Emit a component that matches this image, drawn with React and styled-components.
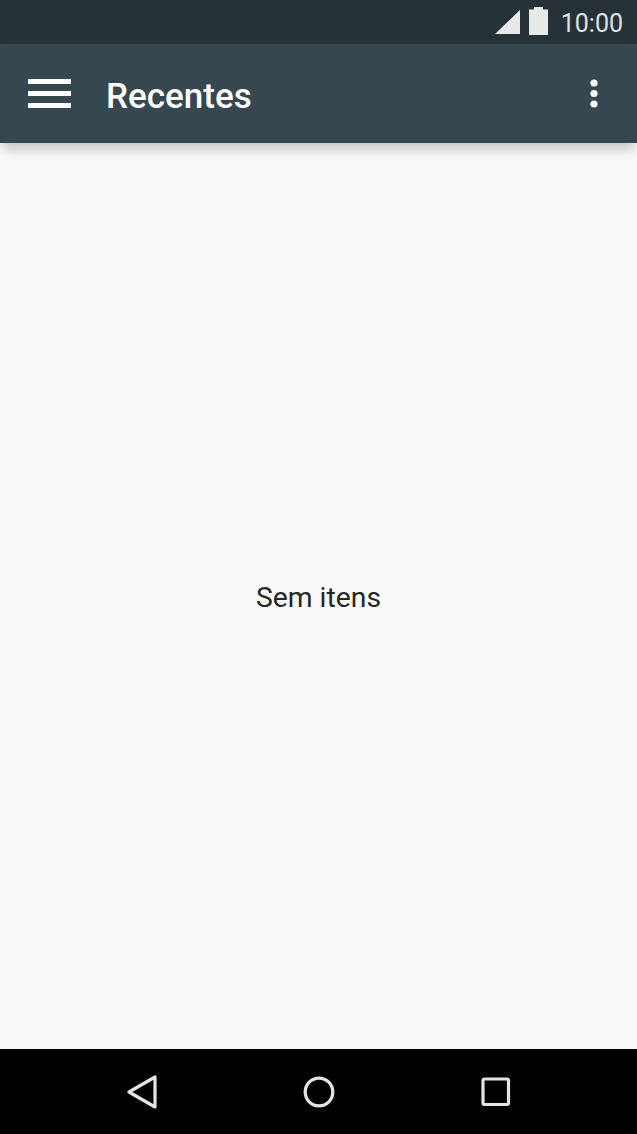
import React from "react";
import styled, { createGlobalStyle } from "styled-components";

const GlobalStyle = createGlobalStyle`
  html, body {
    margin: 0;
    padding: 0;
    height: 100%;
    background: #fafafa;
  }
  #root {
    height: 100%;
  }
`;

const Screen = styled.div`
  width: 637px;
  height: 1134px;
  display: flex;
  flex-direction: column;
  overflow: hidden;
  font-family: Roboto, "Liberation Sans", sans-serif;
  background: #fafafa;
`;

const StatusBar = styled.div`
  height: 44px;
  flex: none;
  display: flex;
  align-items: center;
  justify-content: flex-end;
  padding-right: 14px;
  background: #263238;
`;

const SignalIcon = styled.svg`
  display: block;
  margin-right: 9px;
`;

const BatteryIcon = styled.svg`
  display: block;
  margin-right: 13px;
  margin-bottom: 2px;
`;

const Clock = styled.span`
  padding-top: 4px;
  font-size: 25px;
  line-height: 44px;
  color: #dfe1e2;
`;

const Toolbar = styled.header`
  position: relative;
  z-index: 1;
  height: 99px;
  flex: none;
  display: flex;
  align-items: center;
  padding: 0 39px 0 28px;
  background: #37474f;
  box-shadow: 0 9px 12px -2px rgba(0, 0, 0, 0.2);
`;

const MenuIcon = styled.svg`
  display: block;
  margin-right: 35px;
`;

const Title = styled.h1`
  flex: 1;
  margin: 0;
  padding-top: 5px;
  font-size: 35px;
  font-weight: 500;
  color: #ffffff;
`;

const OverflowIcon = styled.svg`
  display: block;
`;

const Content = styled.main`
  flex: 1;
  display: flex;
  align-items: center;
  justify-content: center;
  background: #fafafa;
`;

const EmptyText = styled.p`
  margin: 0;
  padding-top: 2px;
  font-size: 28.3px;
  color: #262626;
`;

const NavBar = styled.nav`
  height: 85px;
  flex: none;
  display: flex;
  align-items: center;
  justify-content: center;
  gap: 146px;
  background: #000000;
`;

const NavIcon = styled.svg`
  display: block;
  fill: none;
  stroke: #e4e4e4;
  stroke-width: 3.2;
  stroke-linejoin: round;
`;

export default function App() {
  return (
    <Screen>
      <GlobalStyle />
      <StatusBar>
        <SignalIcon width="25" height="24" viewBox="0 0 25 24">
          <path d="M25 0V24H0Z" fill="#e8e9e9" />
        </SignalIcon>
        <BatteryIcon width="19" height="28" viewBox="0 0 19 28">
          <path d="M5 0H14V2.5H19V28H0V2.5H5Z" fill="#e8e9e9" />
        </BatteryIcon>
        <Clock>10:00</Clock>
      </StatusBar>
      <Toolbar>
        <MenuIcon width="43" height="29" viewBox="0 0 43 29">
          <path d="M0 0H43V5H0ZM0 12H43V17H0ZM0 24H43V29H0Z" fill="#ffffff" />
        </MenuIcon>
        <Title>Recentes</Title>
        <OverflowIcon width="8" height="29" viewBox="0 0 8 29">
          <circle cx="4" cy="4" r="3.6" fill="#ffffff" />
          <circle cx="4" cy="14.5" r="3.6" fill="#ffffff" />
          <circle cx="4" cy="25" r="3.6" fill="#ffffff" />
        </OverflowIcon>
      </Toolbar>
      <Content>
        <EmptyText>Sem itens</EmptyText>
      </Content>
      <NavBar>
        <NavIcon width="30" height="34" viewBox="0 0 30 34">
          <path d="M28 2V32L2 17Z" />
        </NavIcon>
        <NavIcon width="32" height="32" viewBox="0 0 32 32">
          <circle cx="16" cy="16" r="13.8" />
        </NavIcon>
        <NavIcon width="30" height="30" viewBox="0 0 30 30">
          <rect x="2" y="2" width="25.5" height="25.5" rx="1.5" />
        </NavIcon>
      </NavBar>
    </Screen>
  );
}
